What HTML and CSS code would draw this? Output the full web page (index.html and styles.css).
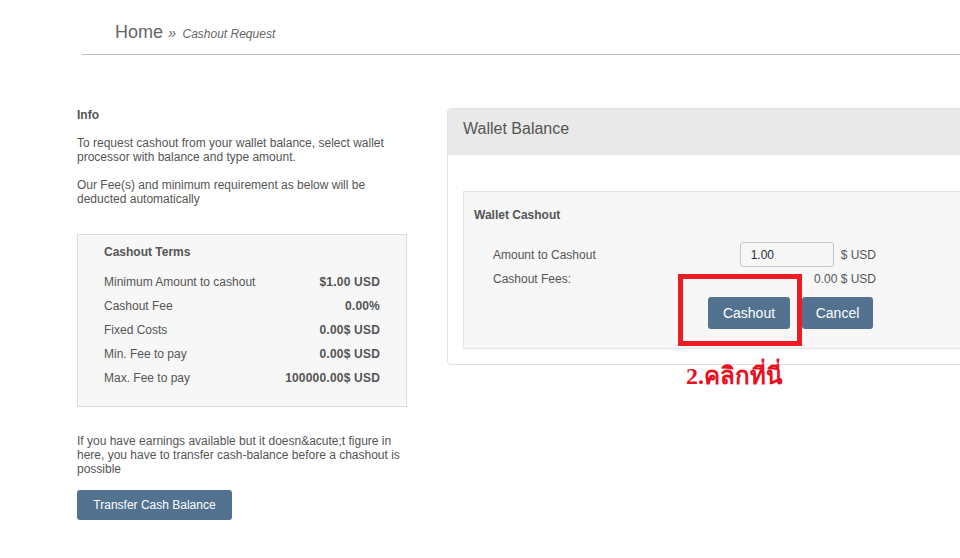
FILE: index.html
```html
<!DOCTYPE html>
<html lang="en">
<head>
    <meta charset="UTF-8">
    <meta name="viewport" content="width=device-width, initial-scale=1.0">
    <title>Cashout Request</title>
    <link rel="stylesheet" href="styles.css">
</head>
<body>
    <div class="breadcrumb">
        <a href="#" class="crumb-home">Home</a>
        <span class="crumb-sep">&raquo;</span>
        <span class="crumb-current">Cashout Request</span>
    </div>

    <div class="content">
        <div class="info-col">
            <h4>Info</h4>
            <p>To request cashout from your wallet balance, select wallet processor with balance and type amount.</p>
            <p>Our Fee(s) and minimum requirement as below will be deducted automatically</p>

            <div class="terms">
                <h4>Cashout Terms</h4>
                <ul class="terms-list">
                    <li><span>Minimum Amount to cashout</span><b>$1.00 USD</b></li>
                    <li><span>Cashout Fee</span><b>0.00%</b></li>
                    <li><span>Fixed Costs</span><b>0.00$ USD</b></li>
                    <li><span>Min. Fee to pay</span><b>0.00$ USD</b></li>
                    <li><span>Max. Fee to pay</span><b>100000.00$ USD</b></li>
                </ul>
            </div>

            <p class="note">If you have earnings available but it doesn&amp;acute;t figure in here, you have to transfer cash-balance before a chashout is possible</p>
            <button class="btn">Transfer Cash Balance</button>
        </div>

        <div class="wallet-col">
            <div class="panel">
                <div class="panel-heading">Wallet Balance</div>
                <div class="panel-body">
                    <div class="cashout-box">
                        <h4>Wallet Cashout</h4>
                        <form class="cashout-form">
                            <div class="form-row">
                                <label for="amount">Amount to Cashout</label>
                                <div class="field">
                                    <input type="text" id="amount" value="1.00">
                                    <span>$ USD</span>
                                </div>
                            </div>
                            <div class="form-row">
                                <label>Cashout Fees:</label>
                                <div class="field">0.00 $ USD</div>
                            </div>
                            <div class="form-actions">
                                <button type="button" class="btn btn-lg btn-cashout">Cashout</button>
                                <button type="button" class="btn btn-lg btn-cancel">Cancel</button>
                            </div>
                        </form>
                    </div>
                </div>
            </div>
        </div>
    </div>

    <!-- annotation drawn over the screenshot -->
    <div class="mark-box"></div>
    <div class="mark-text">2.คลิกที่นี่</div>
</body>
</html>
```

FILE: styles.css
```css
* {
    box-sizing: border-box;
    margin: 0;
    padding: 0;
}

body {
    font-family: 'Liberation Sans', Arial, sans-serif;
    font-size: 12px;
    line-height: 14px;
    color: #555;
    background: #fff;
    overflow: hidden;
    position: relative;
    width: 960px;
    height: 558px;
}

.breadcrumb {
    margin-left: 82px;
    padding-left: 33px;
    height: 55px;
    padding-top: 25px;
    border-bottom: 1px solid #bbb;
    width: 900px;
}

.crumb-home {
    font-size: 18px;
    color: #666;
    text-decoration: none;
}

.crumb-sep,
.crumb-current {
    font-style: italic;
    color: #666;
}

.crumb-sep {
    font-size: 14px;
    margin: 0 3px 0 2px;
}

.content {
    display: flex;
    gap: 40px;
    margin-top: 53px;
    padding-left: 77px;
}

.info-col {
    width: 330px;
    flex-shrink: 0;
}

h4 {
    font-size: 12px;
    font-weight: bold;
}

.info-col > h4 {
    margin-bottom: 14px;
}

.info-col > p {
    margin-bottom: 14px;
}

.terms {
    margin-top: 28px;
    background: #f7f7f7;
    border: 1px solid #ddd;
    padding: 10px 26px 16px;
}

.terms-list {
    list-style: none;
    margin-top: 11px;
}

.terms-list li {
    display: flex;
    justify-content: space-between;
    line-height: 24px;
}

.terms-list b {
    letter-spacing: 0.2px;
}

.note {
    margin-top: 27px;
}

.btn {
    font-family: inherit;
    font-size: 12px;
    color: #fff;
    background-color: #52728f;
    border: none;
    border-radius: 3px;
    cursor: pointer;
}

.info-col .btn {
    width: 155px;
    height: 30px;
}

.wallet-col {
    width: 560px;
    flex-shrink: 0;
}

.panel {
    border: 1px solid #e2e2d8;
    border-radius: 4px;
    overflow: hidden;
}

.panel-heading {
    height: 46px;
    background: #e9e9e9;
    font-size: 16px;
    line-height: 20px;
    padding: 10px 15px;
}

.panel-body {
    padding: 36px 15px 15px;
}

.cashout-box {
    background: #f7f7f7;
    border: 1px solid #e3e3e3;
    padding: 16px 10px 19px;
}

.cashout-form {
    width: 383px;
    margin: 20px 0 0 19px;
}

.form-row {
    display: flex;
    justify-content: space-between;
    align-items: center;
    height: 25px;
}

.form-row + .form-row {
    height: 24px;
}

.field {
    display: flex;
    align-items: center;
    gap: 7px;
}

.field input {
    width: 94px;
    height: 25px;
    padding: 0 10px;
    border: 1px solid #c8c8c8;
    border-radius: 3px;
    background: #f7f7f7;
    font-family: inherit;
    font-size: 12px;
    color: #1f2f45;
}

.form-actions {
    display: flex;
    justify-content: flex-end;
    gap: 12px;
    margin-top: 6px;
    padding-right: 3px;
}

.btn-lg {
    font-size: 14px;
    height: 32px;
}

.btn-cashout {
    width: 82px;
}

.btn-cancel {
    width: 71px;
}

.mark-box {
    position: absolute;
    left: 678px;
    top: 274px;
    width: 124px;
    height: 72px;
    border: 5px solid #ed1c24;
}

.mark-text {
    position: absolute;
    left: 686px;
    top: 361px;
    font-family: 'Liberation Serif', 'Times New Roman', serif;
    font-size: 24px;
    line-height: 30px;
    font-weight: bold;
    color: #e8101f;
}
```
